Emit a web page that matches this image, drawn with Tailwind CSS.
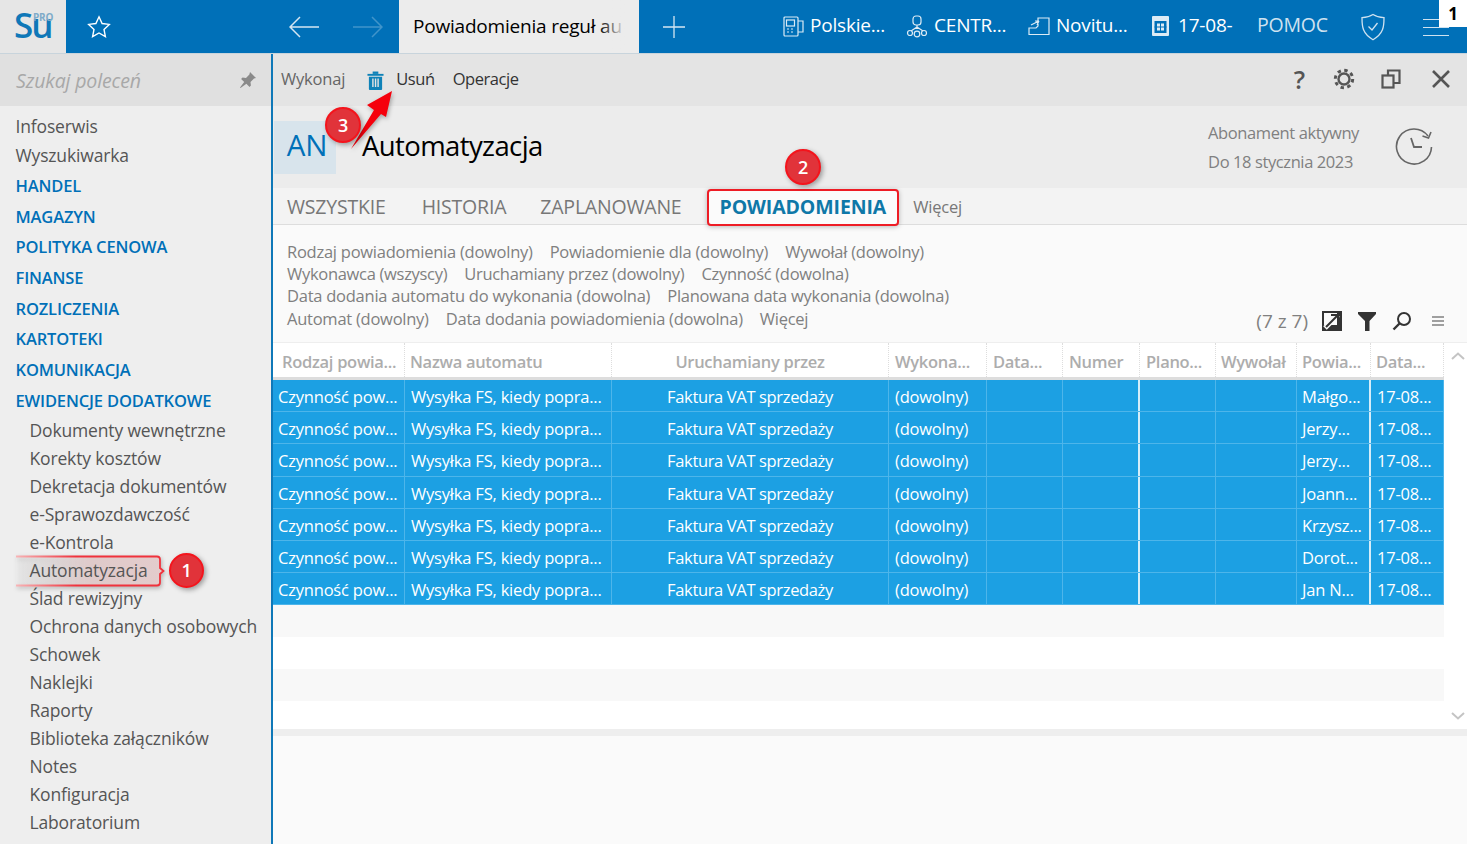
<!DOCTYPE html>
<html lang="pl">
<head>
    <meta charset="UTF-8">
    <title>Automatyzacja</title>
    <script src="https://cdn.jsdelivr.net/npm/@tailwindcss/browser@4"></script>
</head>
<body class="relative w-[1467px] h-[844px] overflow-hidden bg-[#fafafa] font-['Open_Sans','Noto_Sans',sans-serif] tracking-[-0.2px]">

    <!-- Top bar -->
    <header class="flex h-[53px] bg-[#0070b8] text-white text-[19px]">
        <div class="relative w-[66px] bg-[#e6e6e6] text-[#0f78b8]">
            <span class="absolute left-[14px] top-[5px] text-[35px] font-semibold leading-[40px] tracking-[-2px]">Su</span>
            <span class="absolute left-[33px] top-[12px] text-[10px] font-bold leading-none text-[#7fabc9]">PRO</span>
        </div>
        <div class="w-[66px] flex items-center justify-center">
            <svg class="w-6 h-6" viewBox="0 0 24 24" fill="none" stroke="#fff" stroke-width="1.4"><path d="M12 1.800l3.100 6.700 7.200.9-5.300 5 1.400 7.200-6.400-3.600-6.400 3.600 1.400-7.200-5.300-5 7.200-.9z"/></svg>
        </div>
        <div class="w-[267px] flex items-center pl-[157px] gap-[34px]">
            <svg class="w-[30px] h-[24px]" viewBox="0 0 30 24" fill="none" stroke="#d5e6f2" stroke-width="1.5"><path d="M30 12H1M11 2L1 12l10 10"/></svg>
            <svg class="w-[30px] h-[24px] opacity-25" viewBox="0 0 30 24" fill="none" stroke="#fff" stroke-width="1.5"><path d="M0 12h29M19 2l10 10-10 10"/></svg>
        </div>
        <div class="w-[240px] bg-[#ececec] text-black flex items-center pl-[14px] overflow-hidden whitespace-nowrap relative">
            <span>Powiadomienia reguł au</span>
            <div class="absolute right-[14px] top-0 h-full w-[26px] bg-gradient-to-r from-transparent to-[#ececec]"></div>
            <div class="absolute right-0 top-0 h-full w-[14px] bg-[#ececec]"></div>
        </div>
        <div class="w-[69px] flex items-center justify-center">
            <svg class="w-6 h-6" viewBox="0 0 24 24" stroke="#d5e6f2" stroke-width="1.3"><path d="M12 1v22M1 12h22"/></svg>
        </div>
        <div class="flex items-center pl-[75px] gap-[5px] w-[198px] pb-[2px]">
            <svg class="w-[22px] h-[22px] shrink-0" viewBox="0 0 22 22" fill="none" stroke="#dcebf5" stroke-width="1.2"><rect x="1" y="2" width="14" height="19" rx="1"/><rect x="3.500" y="5" width="8" height="6"/><path d="M4 14h2M8 14h2M4 17h2M8 17h2M15 6h5v11h-5"/></svg>
            <span>Polskie...</span>
        </div>
        <div class="flex items-center gap-[6px] w-[122px] pb-[2px]">
            <svg class="w-[22px] h-[24px] shrink-0" viewBox="0 0 22 24" fill="none" stroke="#dcebf5" stroke-width="1.2"><rect x="7" y="2" width="8" height="9" rx="3"/><path d="M11 11v4M11 13l-6 4M11 13l6 4"/><circle cx="4" cy="19" r="2.500"/><circle cx="18" cy="19" r="2.500"/><circle cx="11" cy="20" r="2.800"/></svg>
            <span>CENTR...</span>
        </div>
        <div class="flex items-center gap-[6px] w-[123px] pb-[2px]">
            <svg class="w-[22px] h-[20px] shrink-0" viewBox="0 0 22 20" fill="none" stroke="#dcebf5" stroke-width="1.200"><path d="M1 18.500V12h7l2-2V2h11v16.500zM3 9l8-4M11 5H7M11 5l-2 4"/></svg>
            <span>Novitu...</span>
        </div>
        <div class="flex items-center gap-[8px] w-[106px] pb-[2px]">
            <svg class="w-[19px] h-[22px] shrink-0" viewBox="0 0 19 22"><rect x="1" y="1" width="17" height="20" rx="1" fill="#dcebf5"/><rect x="3.500" y="6" width="12" height="12" fill="#0070b8"/><rect x="6" y="8.500" width="7" height="7" fill="#dcebf5"/><path d="M9.500 6v12M3.500 12h12" stroke="#0070b8"/></svg>
            <span>17-08-</span>
        </div>
        <div class="flex items-center pb-[4px] text-[#cfe2f0] w-[103px] text-[19.500px]">POMOC</div>
        <div class="flex items-center w-[63px]">
            <svg class="w-[26px] h-[28px]" viewBox="0 0 26 28" fill="none" stroke="#cfe2f0" stroke-width="1.3"><path d="M13 1.500c3 2 6.500 3 11 3.200 0 9-.5 16-11 22C2.500 20.700 2 13.700 2 4.700 6.500 4.500 10 3.500 13 1.500z"/><path d="M8.500 13.500l3.500 3.500 5.500-7"/></svg>
        </div>
        <div class="flex flex-col justify-center gap-[7px] w-[26px] pt-[1px]">
            <div class="h-px bg-[#cfe2f0]"></div><div class="h-px bg-[#cfe2f0]"></div><div class="h-px bg-[#cfe2f0]"></div>
        </div>
    </header>
    <div class="absolute right-0 top-0 w-[28px] h-[27px] bg-white text-black font-bold text-[17px] flex items-center justify-center">1</div>

    <div class="flex h-[791px] border-t border-[#c8d4dc]">
        <!-- Sidebar -->
        <aside class="w-[273px] shrink-0 bg-[#eeeeee] border-r-2 border-[#0f78b8] text-[#555] text-[17.500px] tracking-[-0.15px]">
            <div class="h-[52px] bg-[#e0e0e0] flex items-center justify-between pl-4 pr-[14px]">
                <span class="italic text-[#a8a8a8] text-[19.500px] pt-[2px]">Szukaj poleceń</span>
                <svg class="w-[18px] h-[18px]" viewBox="0 0 18 18" fill="#8a8a8a"><path d="M11 1l6 6-2 .6-3.500 3.400.4 3.500-1.400 1.400-3.100-3.100L1.500 17 1 16.500l4.200-5.400-3.100-3.100L3.500 6.600 7 7l3.400-3.500z"/></svg>
            </div>
            <nav class="pt-[6px] pl-[15.500px] whitespace-nowrap">
                <div class="h-[29px] leading-[29px]">Infoserwis</div>
                <div class="h-[30px] leading-[29px]">Wyszukiwarka</div>
                <div class="font-semibold text-[#0070b8] text-[16.500px]">
                    <div class="h-[30.700px] leading-[30.700px]">HANDEL</div>
                    <div class="h-[30.700px] leading-[30.700px]">MAGAZYN</div>
                    <div class="h-[30.700px] leading-[30.700px]">POLITYKA CENOWA</div>
                    <div class="h-[30.700px] leading-[30.700px]">FINANSE</div>
                    <div class="h-[30.700px] leading-[30.700px]">ROZLICZENIA</div>
                    <div class="h-[30.700px] leading-[30.700px]">KARTOTEKI</div>
                    <div class="h-[30.700px] leading-[30.700px]">KOMUNIKACJA</div>
                    <div class="h-[30.700px] leading-[30.700px]">EWIDENCJE DODATKOWE</div>
                </div>
                <div class="pl-[14px] [&>div]:h-[28px] [&>div]:leading-[27px]">
                    <div>Dokumenty wewnętrzne</div>
                    <div>Korekty kosztów</div>
                    <div>Dekretacja dokumentów</div>
                    <div>e-Sprawozdawczość</div>
                    <div>e-Kontrola</div>
                    <div class="relative">
                        <!-- callout 1 -->
                        <svg class="absolute left-[-14px] top-[-2px] w-[150px] h-[32px] drop-shadow-[1px_2px_2px_rgba(0,0,0,0.25)]" viewBox="0 0 150 32" fill="none">
                            <defs>
                                <linearGradient id="calloutFill" x1="0" x2="1" y1="0" y2="0"><stop offset="0" stop-color="#eeeeee" stop-opacity="0.2"/><stop offset="0.5" stop-color="#dfcaca"/><stop offset="1" stop-color="#e3cccc"/></linearGradient>
                                <linearGradient id="calloutLine" gradientUnits="userSpaceOnUse" x1="0" x2="60" y1="0" y2="0"><stop offset="0" stop-color="#f8b4b6"/><stop offset="1" stop-color="#f0323c"/></linearGradient>
                            </defs>
                            <path d="M0 1.500H141a3 3 0 0 1 3 3V13l3.500 3-3.500 3v8.500a3 3 0 0 1-3 3H0" fill="url(#calloutFill)" stroke="url(#calloutLine)" stroke-width="1.800"/>
                        </svg>
                        <span class="relative">Automatyzacja</span>
                    </div>
                    <div>Ślad rewizyjny</div>
                    <div>Ochrona danych osobowych</div>
                    <div>Schowek</div>
                    <div>Naklejki</div>
                    <div>Raporty</div>
                    <div>Biblioteka załączników</div>
                    <div>Notes</div>
                    <div>Konfiguracja</div>
                    <div>Laboratorium</div>
                </div>
            </nav>
        </aside>

        <!-- Main -->
        <main class="flex-1 min-w-0">
            <div class="h-[52px] bg-[#e4e4e4] flex items-center pl-2 pr-[17px] pb-[2px] text-[16.500px]">
                <span class="text-[#666]">Wykonaj</span>
                <svg class="w-[17px] h-[19px] ml-[22px] mt-[2px]" viewBox="0 0 18 20" fill="#0f82b8"><rect x="0.500" y="3" width="17" height="2"/><rect x="6" y="0.500" width="6" height="2.500"/><path d="M2 6h14v13a1 1 0 0 1-1 1H3a1 1 0 0 1-1-1zM5.500 8v9h1.500V8zM8.300 8v9h1.500V8zM11 8v9h1.500V8z" fill-rule="evenodd"/></svg>
                <span class="ml-[12px] text-[#333] tracking-[-0.4px]">Usuń</span>
                <span class="ml-[18px] text-[#333] tracking-[-0.45px]">Operacje</span>
                <div class="ml-auto flex items-center">
                    <span class="text-[25px] font-semibold text-[#555] leading-none">?</span>
                    <svg class="w-[22px] h-[22px] ml-[28px]" viewBox="0 0 22 22" fill="none" stroke="#555"><circle cx="11" cy="11" r="5.500" stroke-width="2.400"/><circle cx="11" cy="11" r="8.700" stroke-width="3" stroke-dasharray="3.400 3.430"/></svg>
                    <svg class="w-[20px] h-[20px] ml-[26px]" viewBox="0 0 20 20" fill="none" stroke="#555" stroke-width="2.200"><rect x="1.500" y="6.500" width="11" height="12"/><path d="M7 6V1.500h11.500V14H13"/></svg>
                    <svg class="w-[18px] h-[18px] ml-[31px]" viewBox="0 0 18 18" stroke="#555" stroke-width="2.600"><path d="M1 1l16 16M17 1L1 17"/></svg>
                </div>
            </div>

            <div class="h-[82px] bg-[#ececec] flex items-center pl-px pr-[34px]">
                <div class="w-[62px] h-[53px] bg-[#d8e4ec] text-[#0070b8] text-[29.500px] flex items-center justify-center pb-[3px] pl-[4px]">AN</div>
                <div class="ml-[26px] text-[27.500px] text-black tracking-[-0.6px] pb-[2px]">Automatyzacja</div>
                <div class="ml-auto text-[#808080] text-[16.500px] leading-[29px] tracking-[-0.4px]">
                    <div>Abonament aktywny</div>
                    <div>Do 18 stycznia 2023</div>
                </div>
                <svg class="ml-[36px] w-[38px] h-[38px]" viewBox="0 0 38 38" fill="none" stroke="#666" stroke-width="1.600"><path d="M33 8A17.500 17.500 0 1 0 36.500 19"/><path d="M36 4l-2.500 6-6-2"/><path d="M16 10l3 9h8" stroke-width="1.800"/></svg>
            </div>

            <div class="h-[37px] bg-[#f3f3f3] border-b border-[#ddd] flex items-center pl-[14px] pt-[2px] text-[#777] text-[19.500px] whitespace-nowrap">
                <span>WSZYSTKIE</span>
                <span class="ml-[36px]">HISTORIA</span>
                <span class="ml-[34px]">ZAPLANOWANE</span>
                <span class="relative z-10 ml-[38px] font-bold text-[#0f78a8] tracking-[-0.1px]">
                    <!-- callout 2 -->
                    <span class="absolute left-[-13px] right-[-13px] top-[-3.500px] bottom-[-4.500px] rounded-[4px] border-2 border-[#ee1c25] bg-[#fbfbfb] shadow-[0_1px_5px_rgba(0,0,0,0.25)]"></span>
                    <span class="relative">POWIADOMIENIA</span>
                </span>
                <span class="ml-[27px] text-[16.500px]">Więcej</span>
            </div>

            <div class="relative h-[118px] bg-[#fafafa] border-b border-[#eee] pl-[14px] pt-[16px] text-[#808080] text-[16.500px] leading-[22.200px] tracking-[-0.25px] whitespace-nowrap">
                <div class="flex gap-[17px]"><span>Rodzaj powiadomienia (dowolny)</span><span>Powiadomienie dla (dowolny)</span><span>Wywołał (dowolny)</span></div>
                <div class="flex gap-[17px] tracking-[-0.3px]"><span>Wykonawca (wszyscy)</span><span>Uruchamiany przez (dowolny)</span><span>Czynność (dowolna)</span></div>
                <div class="flex gap-[17px]"><span>Data dodania automatu do wykonania (dowolna)</span><span>Planowana data wykonania (dowolna)</span></div>
                <div class="flex gap-[17px]"><span>Automat (dowolny)</span><span>Data dodania powiadomienia (dowolna)</span><span>Więcej</span></div>
                <div class="absolute right-[23px] top-[85px] flex items-center text-[#808080] text-[19px] tracking-normal">
                    <span class="mr-[14px]">(7 z 7)</span>
                    <svg class="w-[20px] h-[20px]" viewBox="0 0 20 20"><rect width="20" height="20" fill="#333"/><rect x="2" y="2" width="13" height="12" fill="#fafafa"/><path d="M3 17L16 4" stroke="#fafafa" stroke-width="5"/><path d="M4 16L15 5M9 4h7v7" stroke="#333" stroke-width="2" fill="none"/></svg>
                    <svg class="w-[18px] h-[19px] ml-[16px]" viewBox="0 0 18 19" fill="#333"><path d="M0 0h18v2l-6.500 7v10H7V9L0 2z"/></svg>
                    <svg class="w-[20px] h-[20px] ml-[16px]" viewBox="0 0 20 20" fill="none" stroke="#333" stroke-width="2"><circle cx="12" cy="8" r="6"/><path d="M7.500 12.500L1.500 18.500" stroke-width="2.400"/></svg>
                    <svg class="w-[12px] h-[10px] ml-[20px]" viewBox="0 0 12 10" stroke="#444" stroke-width="1.200"><path d="M0 1h12M0 5h12M0 9h12"/></svg>
                </div>
            </div>

            <!-- Table -->
            <div class="relative bg-white">
                <div class="grid grid-cols-[132px_207px_277px_98px_76px_77px_76px_81px_74px_73px] w-[1171px] h-[37px] border-b-[3px] border-[#ddd] text-[#adadad] font-semibold text-[16.500px] tracking-[-0.3px] items-center whitespace-nowrap [&>div]:h-full [&>div]:leading-[38px] [&>div]:border-r [&>div]:border-dotted [&>div]:border-[#ddd] [&>div]:overflow-hidden">
                    <div class="pl-[9px]">Rodzaj powia...</div><div class="pl-[5px]">Nazwa automatu</div><div class="text-center">Uruchamiany przez</div><div class="pl-[6px]">Wykona...</div><div class="pl-[6px]">Data...</div><div class="pl-[6px]">Numer</div><div class="pl-[6px]">Plano...</div><div class="pl-[5px]">Wywołał</div><div class="pl-[5px]">Powia...</div><div class="pl-[5px]">Data...</div>
                </div>
                <div id="rows" class="w-[1171px]"></div>
                <div class="h-[32px] w-[1171px] bg-[#f8f8f8]"></div>
                <div class="h-[32px] w-[1171px] bg-white"></div>
                <div class="h-[32px] w-[1171px] bg-[#f8f8f8]"></div>
                <div class="h-[28px] w-[1171px] bg-white"></div>
                <div class="h-[7px] bg-[#eeeeee]"></div>
                <svg class="absolute right-[2px] top-[9px] w-[14px] h-[8px]" viewBox="0 0 14 8" fill="none" stroke="#c4c4c4" stroke-width="2"><path d="M1 7l6-5.500L13 7"/></svg>
                <svg class="absolute right-[2px] top-[369px] w-[14px] h-[8px]" viewBox="0 0 14 8" fill="none" stroke="#c4c4c4" stroke-width="2"><path d="M1 1l6 5.500L13 1"/></svg>
            </div>
        </main>
    </div>

    <!-- Annotations -->
    <div class="absolute left-[169px] top-[553px] w-[35px] h-[35px] rounded-full bg-[#e1333a] border-2 border-[#f4141c] shadow-[2px_2px_5px_rgba(0,0,0,0.35)] flex items-center justify-center text-white font-semibold text-[18px] z-20">1</div>
    <div class="absolute left-[785px] top-[149px] w-[36px] h-[36px] rounded-full bg-[#e1333a] border-2 border-[#f4141c] shadow-[2px_2px_5px_rgba(0,0,0,0.35)] flex items-center justify-center text-white font-semibold text-[18px] z-20">2</div>
    <svg class="absolute left-[345px] top-[88px] w-[50px] h-[66px] drop-shadow-[1px_2px_2px_rgba(0,0,0,0.3)] z-20" viewBox="345 88 50 66"><polygon points="392,91 367,105 374,110 351,149 381,114 386,117" fill="#f5000c"/></svg>
    <div class="absolute left-[325px] top-[107px] w-[36px] h-[36px] rounded-full bg-[#e1333a] border-2 border-[#f4141c] shadow-[2px_2px_5px_rgba(0,0,0,0.35)] flex items-center justify-center text-white font-semibold text-[18px] z-20">3</div>

    <script>
        const people = ['Małgo...', 'Jerzy...', 'Jerzy...', 'Joann...', 'Krzysz...', 'Dorot...', 'Jan N...'];
        document.getElementById('rows').innerHTML = people.map(name => `
            <div class="grid grid-cols-[132px_207px_277px_98px_76px_77px_76px_81px_74px_73px] h-[32.200px] bg-[#1ca0e3] text-white text-[16.500px] leading-[33px] border-b border-[#4db5ea] whitespace-nowrap [&>div]:h-full [&>div]:border-r [&>div]:border-[#4db5ea] [&>div]:overflow-hidden">
                <div class="pl-[5px]">Czynność pow...</div>
                <div class="pl-[6px]">Wysyłka FS, kiedy popra...</div>
                <div class="text-center tracking-[-0.35px]">Faktura VAT sprzedaży</div>
                <div class="pl-[6px]">(dowolny)</div>
                <div></div>
                <div class="border-r-2! border-r-[#d5edf9]!"></div>
                <div></div>
                <div></div>
                <div class="pl-[5px] border-r-2! border-r-[#d5edf9]!">${name}</div>
                <div class="pl-[6px]">17-08...</div>
            </div>`).join('');
    </script>
</body>
</html>
